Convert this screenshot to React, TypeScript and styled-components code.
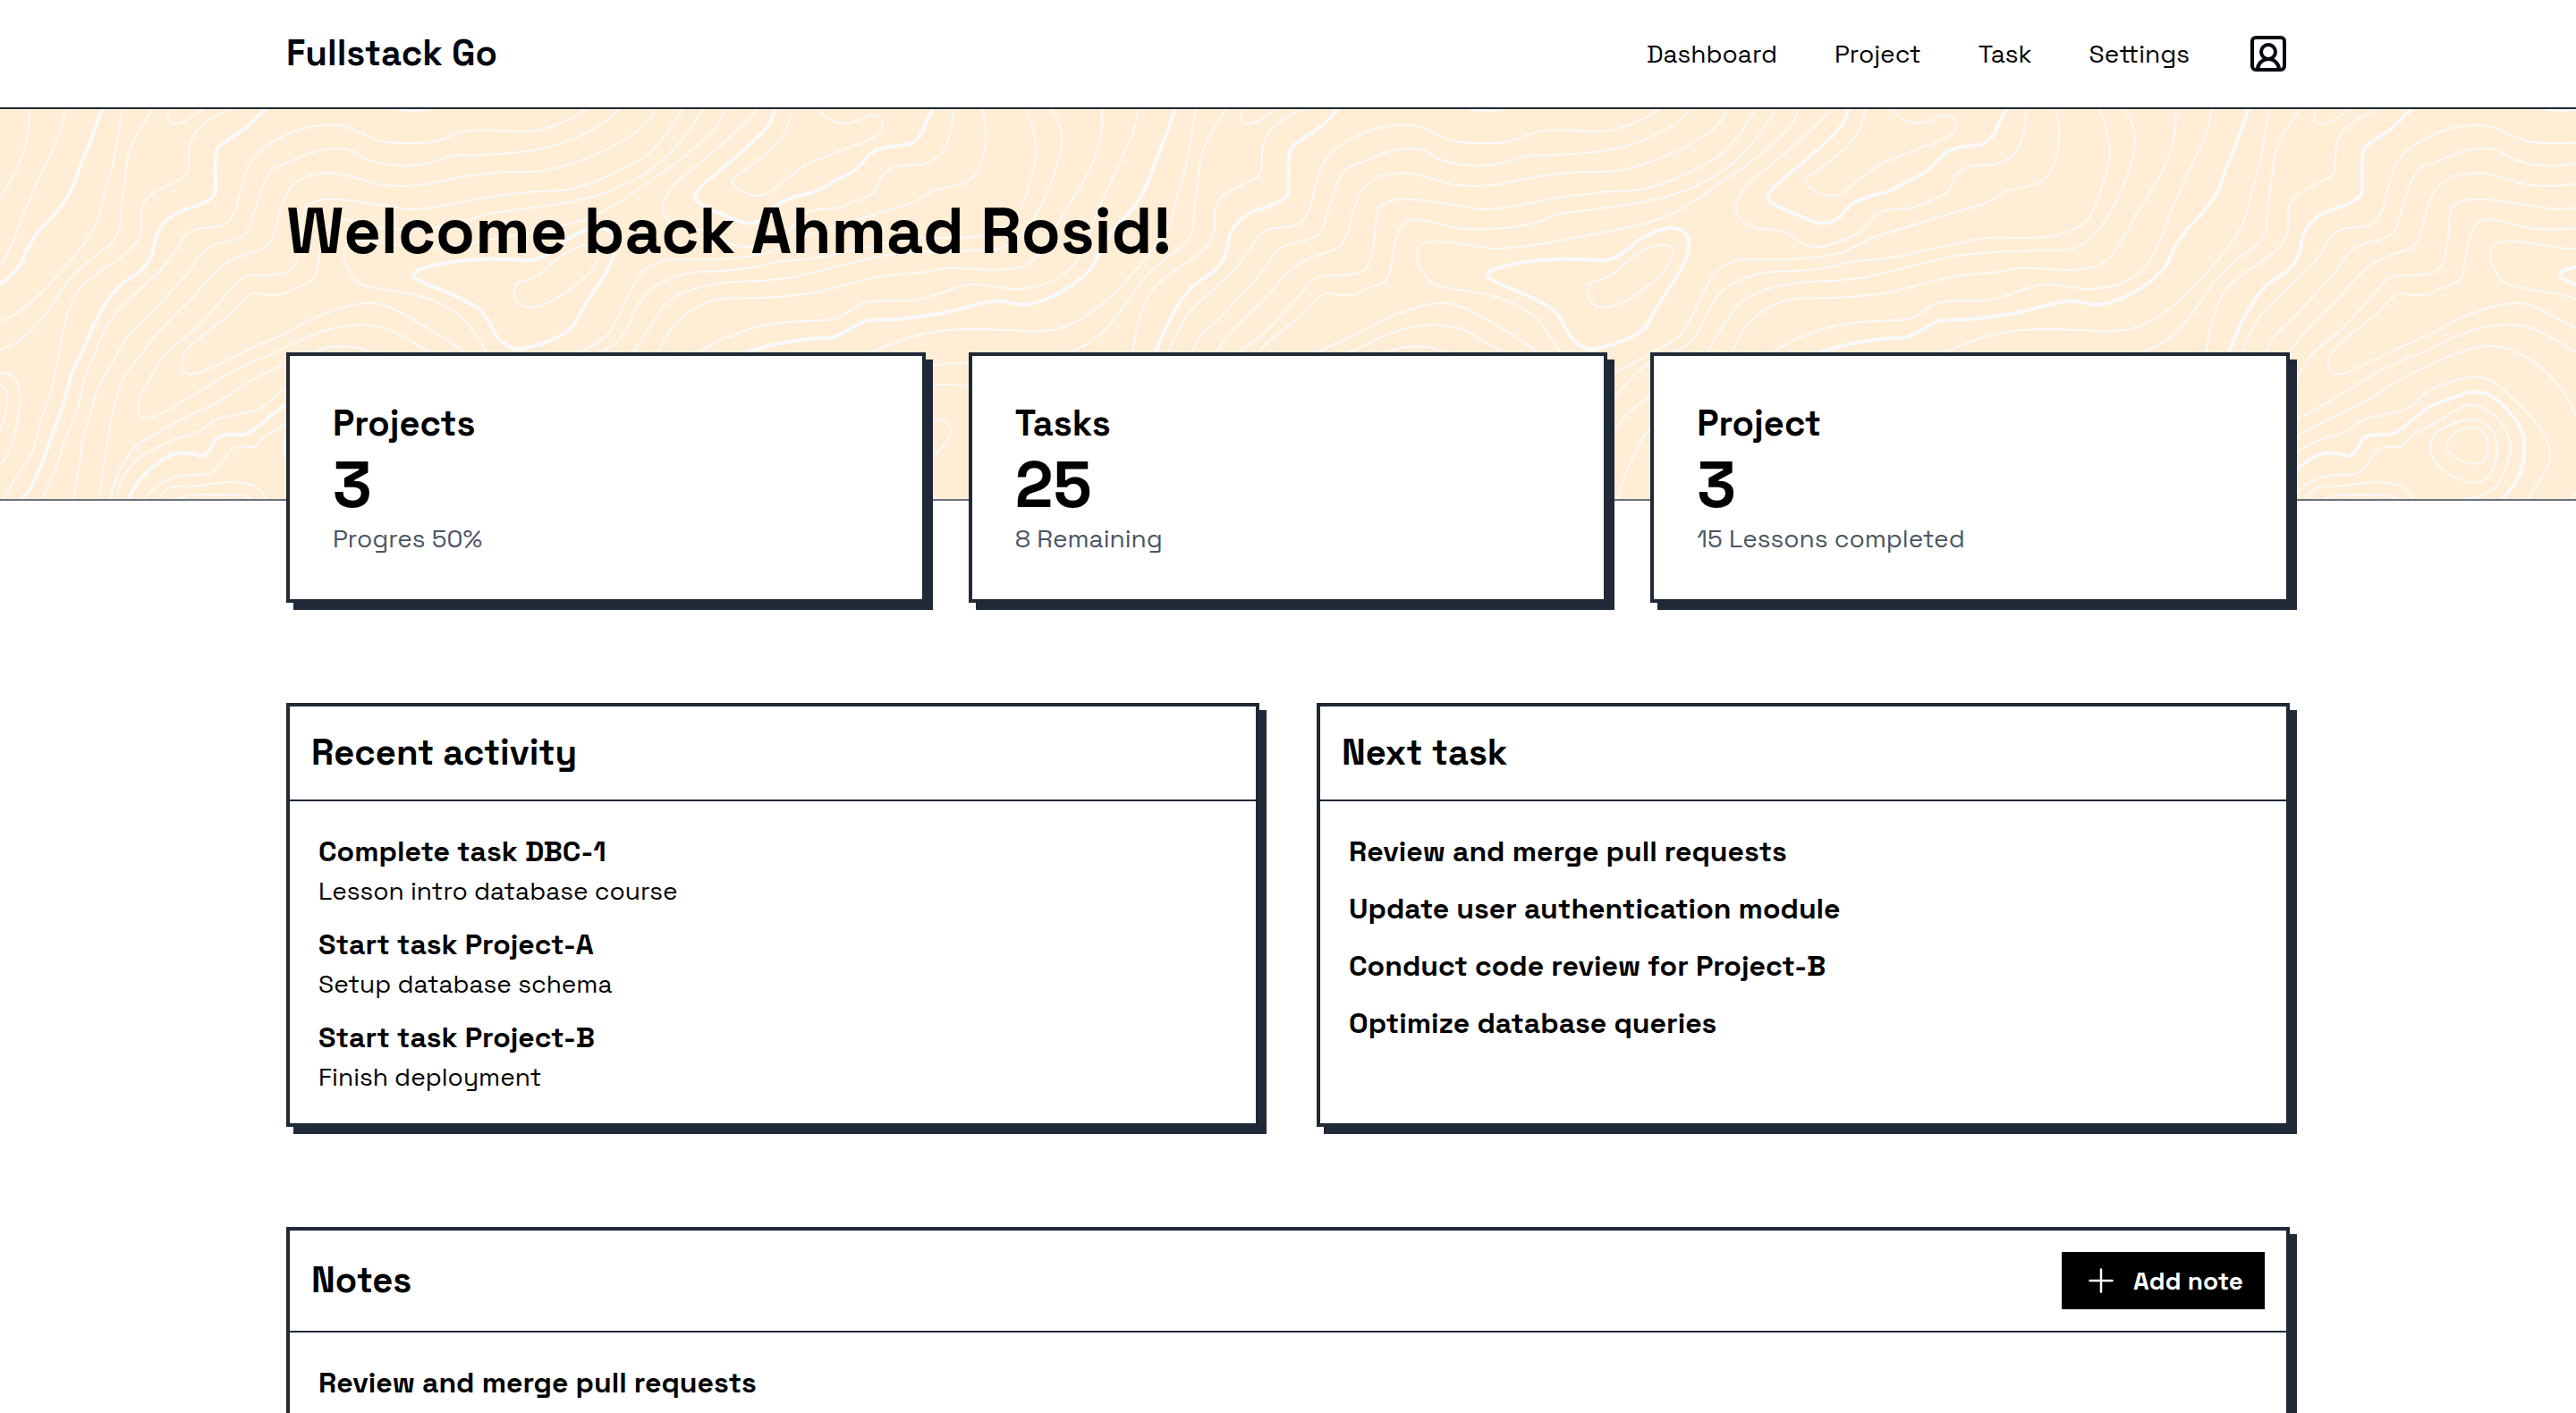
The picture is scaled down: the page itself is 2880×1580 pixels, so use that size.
import React from "react";
import styled, { createGlobalStyle } from "styled-components";
import { SquareUserRound } from "lucide-react";

const ink = "#1f2937";

const GlobalStyle = createGlobalStyle`
  *, *::before, *::after { box-sizing: border-box; }
  body {
    margin: 0;
    background: #ffffff;
    color: #000000;
    font-family: "Space Grotesk", Inter, "Liberation Sans", sans-serif;
    font-size: 28px;
    line-height: 40px;
  }
  h1, h2, h3, p, ul { margin: 0; padding: 0; }
  ul { list-style: none; }
`;

const Container = styled.div`
  width: 100%;
  max-width: 2560px;
  margin: 0 auto;
  padding: 0 160px;
`;

const Header = styled.header`
  border-bottom: 2px solid ${ink};
  background: #ffffff;
`;

const Bar = styled(Container)`
  display: flex;
  align-items: center;
  justify-content: space-between;
  height: 120px;
`;

const Brand = styled.a`
  color: #030712;
  font-size: 40px;
  line-height: 56px;
  font-weight: 600;
  text-decoration: none;
`;

const Nav = styled.nav`
  display: flex;
  align-items: center;
  gap: 64px;
`;

const NavLink = styled.a`
  color: #000000;
  text-decoration: none;
`;

const AccountButton = styled.button`
  display: flex;
  padding: 0;
  border: 0;
  background: none;
  color: #030712;
  cursor: pointer;
`;

const Hero = styled.section`
  position: relative;
  overflow: hidden;
  padding: 96px 0 260px;
  background: #ffedd5;
  border-bottom: 2px solid #6b7280;
`;

const Topography = styled.svg`
  position: absolute;
  inset: 0;
  width: 100%;
  height: 100%;
  fill: none;
  stroke: #f9fafb;
  stroke-width: 2;
`;

const HeroContent = styled(Container)`
  position: relative;
`;

const HeroTitle = styled.h1`
  font-size: 72px;
  line-height: 80px;
  font-weight: 700;
`;

const Main = styled(Container).attrs({ as: "main" })`
  position: relative;
  display: flex;
  flex-direction: column;
  gap: 112px;
  margin-top: -166px;
  padding-bottom: 112px;
`;

const Columns = styled.div<{ $count: number; $gap: number }>`
  display: grid;
  grid-template-columns: repeat(${(p) => p.$count}, minmax(0, 1fr));
  gap: ${(p) => p.$gap}px;
`;

const Box = styled.section`
  border: 4px solid ${ink};
  background: #ffffff;
  box-shadow: 8px 8px 0 ${ink};
`;

const Stat = styled(Box)`
  padding: 48px;
`;

const Heading = styled.h2`
  font-size: 40px;
  line-height: 56px;
  font-weight: 700;
`;

const StatValue = styled.p`
  font-size: 72px;
  line-height: 80px;
  font-weight: 700;
`;

const StatNote = styled.p`
  color: #4b5563;
`;

const PanelHeader = styled.header`
  display: flex;
  align-items: center;
  justify-content: space-between;
  padding: 24px;
  border-bottom: 2px solid ${ink};
`;

const List = styled.ul`
  display: flex;
  flex-direction: column;
  gap: 16px;
  padding: 32px;
`;

const ItemTitle = styled.h3`
  font-size: 32px;
  line-height: 48px;
  font-weight: 600;
`;

const AddButton = styled.button`
  display: flex;
  align-items: center;
  gap: 16px;
  height: 64px;
  padding: 0 24px;
  border: 0;
  background: #000000;
  color: #ffffff;
  font: inherit;
  font-weight: 600;
  cursor: pointer;
`;

const PlusIcon = styled.svg`
  width: 40px;
  height: 40px;
  fill: none;
  stroke: currentColor;
  stroke-width: 1.5;
  stroke-linecap: round;
`;

/* Contour map: each line is a flat x, y list on a 1960-unit-wide repeating sheet. */
type Contour = { pts: number[]; bold?: boolean; closed?: boolean };

const SHEET = 1200;
const UNIT_X = SHEET / 1960;
const UNIT_Y = 1 / 3;
const TOP = 66;

const contours: Contour[] = [
  { bold: true, pts: [972,55,970,66,950,170,930,260,915,335,890,405,855,475,835,530,820,590,800,630,770,670,735,703,705,720,685,722,660,712,640,710,610,720,550,748,500,763,455,772,415,773,395,785,370,810,345,831,320,834,280,842,235,857,185,882] },
  { bold: true, pts: [1274,55,1268,66,1235,125,1200,170,1181,200,1177,270,1176,350,1150,385,1110,412,1085,445,1070,490,1060,560,1040,610,1005,655,980,710,955,790,934,882,914,960,899,1060,879,1160,859,1260,842,1330,824,1374,818,1390] },
  { bold: true, pts: [242,55,240,66,225,125,190,190,140,270,105,325,93,360,105,388,145,420,180,446,205,446,225,425,245,385,275,360,310,343,345,310,385,270,415,215,440,195,485,182,505,150,515,110,527,66,530,55] },
  { bold: true, closed: true, pts: [1539,622,1557,600,1612,578,1672,569,1722,571,1757,572,1782,555,1822,500,1862,468,1887,468,1904,490,1907,540,1892,610,1867,680,1847,740,1827,800,1792,840,1737,870,1717,865,1692,830,1677,780,1657,735,1612,690,1557,648] },
  { bold: true, pts: [1012,1390,1018,1374,1035,1320,1058,1275,1090,1232,1110,1220,1135,1222,1155,1230,1168,1205,1180,1170,1200,1158,1230,1157,1255,1130,1300,1065,1350,1030,1380,1015,1410,1025,1445,1080,1470,1150,1473,1230,1460,1310,1435,1374,1430,1390] },
  { bold: true, pts: [1505,60,1520,67,1540,69,1558,67,1570,60] },
  { pts: [1009,55,1008,66,1000,150,990,250,975,350,962,440,940,510,910,580,860,680,815,750,770,795,740,808,710,811,660,807,600,804,540,810,480,835,415,882] },
  { pts: [1068,55,1064,66,1040,130,1020,210,1012,300,1005,400,1002,470,985,520,950,570,912,635,880,720,845,800,812,850,775,882] },
  { pts: [1215,55,1203,66,1170,98,1142,140,1130,190,1128,260,1122,290,1090,322,1058,355,1043,400,1042,470,1030,520,1000,570,960,620,925,680,903,780,892,882,879,1000,859,1110,844,1210,824,1270,789,1374,784,1390] },
  { pts: [1862,55,1854,66,1829,95,1794,122,1754,140,1690,138,1634,140,1600,163,1568,178,1510,180,1475,172,1440,145,1410,123,1370,121,1320,142,1270,190,1240,250,1225,330,1215,400,1200,445,1180,460,1140,470,1120,495,1105,540,1080,600,1040,670,1000,740,975,810,958,882,939,970,924,1080,902,1180,884,1280,861,1374,858,1390] },
  { pts: [1918,55,1914,66,1884,115,1844,155,1794,190,1734,210,1664,220,1614,223,1568,246,1540,254,1490,252,1455,235,1425,205,1395,198,1360,208,1310,245,1285,262,1270,300,1255,370,1240,460,1230,488,1210,505,1170,525,1150,555,1125,620,1090,690,1050,770,1020,820,1000,882,964,1000,949,1090,934,1180,929,1260,918,1374,917,1390] },
  { pts: [1984,55,1980,66,1970,100,1944,145,1894,200,1834,245,1774,273,1704,277,1634,292,1568,315,1530,323,1480,320,1440,300,1400,283,1365,283,1335,300,1310,340,1295,410,1283,490,1268,530,1240,550,1200,580,1165,635,1140,690,1110,745,1070,820,1044,882,1009,970,989,1090,979,1200,964,1374,963,1390] },
  { pts: [2033,55,2030,66,2000,150,1960,227,1882,300,1822,335,1762,343,1672,362,1592,390,1537,402,1480,388,1420,372,1380,369,1350,385,1338,420,1333,520,1322,590,1302,617,1262,624,1227,632,1192,700,1142,800,1089,882,1064,950,1040,1030,1036,1080,1046,1102,1065,1097,1100,1065,1160,1000,1220,935,1290,880,1350,828,1400,798,1450,790,1490,802,1530,840,1568,885,1600,960] },
  { pts: [2071,55,2068,66,2020,190,1960,285,1892,345,1832,375,1742,400,1672,418,1632,445,1572,465,1492,467,1440,445,1410,436,1385,455,1372,510,1365,580,1355,640,1320,668,1300,687,1270,689,1240,688,1200,760,1150,830,1122,882,1116,920,1122,948,1135,955,1160,942,1230,880,1300,822,1360,765,1420,727,1460,716,1500,735,1564,800,1604,845,1632,882] },
  { pts: [2111,55,2108,66,2090,130,2020,245,1960,320,1922,370,1862,430,1792,465,1692,500,1612,525,1552,534,1500,520,1447,509,1420,520,1412,550,1418,600,1440,650,1480,670,1540,688,1590,720,1630,770,1655,830,1673,882] },
  { closed: true, pts: [1747,640,1772,615,1807,560,1842,527,1867,523,1880,540,1867,600,1832,660,1792,710,1757,730,1734,722,1723,690,1727,655,1737,641] },
  { pts: [212,55,208,66,180,120,120,220,60,310,35,380,40,430,65,462,100,470,125,480,155,515,185,529,215,515,260,480,290,420,320,402,350,400,380,380,420,345,435,290,460,258,510,250,545,210,560,140,564,66,564,55] },
  { pts: [272,55,271,66,255,150,220,220,165,295,162,315,180,342,205,357,230,345,260,300,300,250,360,205,415,165,435,135,430,95,415,88,395,100,370,115,345,105,315,66,308,55] },
  { pts: [617,55,618,66,624,130,622,200,610,270,590,310,565,325,530,340,490,380,420,420,340,465,280,500,230,545,170,565,110,571,45,570,20,585,0,608,-26,680,-46,760,-71,830,-121,885,-150,915,-188,950] },
  { pts: [695,55,697,66,710,130,717,220,705,310,688,400,665,455,610,492,550,498,495,498,430,520,350,552,295,570,250,577,200,597,140,610,90,613,40,640,10,675,-16,740,-31,800,-51,850,-81,882,-123,915,-160,975,-188,1035] },
  { pts: [741,55,745,66,760,130,762,190,750,280,730,370,705,450,675,510,640,538,580,541,500,547,430,560,350,595,270,630,215,641,150,648,90,670,45,710,20,770,0,823,-19,882,-60,960,-123,1027,-165,1090,-188,1145] },
  { pts: [837,55,837,66,836,130,826,215,805,300,765,420,735,520,712,570,685,597,640,605,600,602,550,600,510,613,440,625,380,650,310,682,250,695,190,700,140,703,100,725,60,780,38,835,25,882,-40,1010,-123,1140,-158,1250,-183,1374] },
  { pts: [904,55,903,66,892,150,870,240,850,320,824,430,810,500,790,575,765,622,730,655,690,669,660,667,605,653,575,662,530,690,490,707,435,709,400,717,375,745,350,770,310,775,250,783,200,800,140,840,100,882] },
  { pts: [986,1390,987,1374,990,1340,1005,1270,1030,1200,1058,1167,1100,1120,1180,1050,1240,980,1300,925,1350,885,1390,864,1430,864,1470,890,1520,960,1550,1030,1570,1105] },
  { pts: [998,1390,999,1374,1005,1310,1035,1240,1058,1215,1100,1175,1145,1150,1180,1108,1220,1090,1260,1070,1300,1010,1350,975,1390,965,1420,985,1460,1050,1500,1130,1520,1210,1515,1270,1480,1374,1475,1390] },
  { pts: [1044,1390,1049,1374,1065,1340,1095,1305,1130,1293,1165,1290,1185,1260,1205,1210,1225,1198,1250,1197,1270,1160,1310,1120,1345,1080,1372,1058,1400,1070,1430,1115,1448,1190,1440,1270,1415,1345,1370,1374,1350,1380] },
  { pts: [1070,1390,1074,1374,1095,1335,1140,1330,1200,1318,1240,1325,1260,1345,1271,1374,1275,1390] },
  { pts: [1095,1385,1110,1374,1130,1361,1180,1360,1225,1362,1241,1374,1250,1385] },
  { closed: true, pts: [1376,1107,1400,1120,1420,1160,1422,1240,1405,1305,1375,1318,1335,1290,1308,1240,1302,1190,1315,1150,1345,1120] },
  { closed: true, pts: [1378,1135,1400,1150,1408,1200,1398,1245,1375,1255,1345,1230,1332,1205,1340,1165,1358,1140] },
  { pts: [1557,1390,1561,1374,1570,1340] },
  { pts: [770,955,784,950,804,960,817,990,820,1050,812,1150,799,1220,784,1258,760,1310] },
  { pts: [776,985,784,990,795,1010,796,1070,784,1145,770,1180] },
  { pts: [515,932,530,926,560,919,600,917] },
  { pts: [515,988,530,990,560,990,600,997] },
  { pts: [515,1104,530,1105,552,1115,560,1150,550,1190,528,1230] },
  { pts: [520,1355,528,1365,540,1380] },
  { pts: [1097,55,1095,66,1090,100,1100,115,1118,110,1135,90,1155,66,1160,55] },
];

/* Smooth curve through the points of one contour. */
function trace({ pts, closed }: Contour): string {
  const p: [number, number][] = [];
  for (let i = 0; i < pts.length; i += 2) {
    p.push([pts[i] * UNIT_X, (pts[i + 1] - TOP) * UNIT_Y]);
  }
  const n = p.length;
  const at = (i: number) =>
    closed ? p[(i + n) % n] : p[Math.max(0, Math.min(n - 1, i))];
  const f = (v: number) => v.toFixed(1);
  let d = `M${f(p[0][0])} ${f(p[0][1])}`;
  for (let i = 0; i < (closed ? n : n - 1); i++) {
    const [a, b, c, e] = [at(i - 1), at(i), at(i + 1), at(i + 2)];
    d += `C${f(b[0] + (c[0] - a[0]) / 6)} ${f(b[1] + (c[1] - a[1]) / 6)} ${f(
      c[0] - (e[0] - b[0]) / 6
    )} ${f(c[1] - (e[1] - b[1]) / 6)} ${f(c[0])} ${f(c[1])}`;
  }
  return closed ? d + "Z" : d;
}

const sheets = [-1, 0, 1, 2, 3];
const SHEET_START = 720;

function ContourMap() {
  return (
    <Topography aria-hidden="true">
      <defs>
        <g id="contour-sheet">
          {contours.map((c, i) => (
            <path key={i} d={trace(c)} strokeWidth={c.bold ? 4 : 2} />
          ))}
        </g>
      </defs>
      {sheets.map((n) => (
        <use key={n} href="#contour-sheet" x={SHEET_START + (n - 1) * SHEET} />
      ))}
    </Topography>
  );
}

const links = ["Dashboard", "Project", "Task", "Settings"];

const stats = [
  { title: "Projects", value: "3", note: "Progres 50%" },
  { title: "Tasks", value: "25", note: "8 Remaining" },
  { title: "Project", value: "3", note: "15 Lessons completed" },
];

type Item = { title: string; detail?: string };

const activity: Item[] = [
  { title: "Complete task DBC-1", detail: "Lesson intro database course" },
  { title: "Start task Project-A", detail: "Setup database schema" },
  { title: "Start task Project-B", detail: "Finish deployment" },
];

const nextTasks: Item[] = [
  { title: "Review and merge pull requests" },
  { title: "Update user authentication module" },
  { title: "Conduct code review for Project-B" },
  { title: "Optimize database queries" },
];

const notes: Item[] = [{ title: "Review and merge pull requests" }];

function Panel({
  title,
  items,
  action,
}: {
  title: string;
  items: Item[];
  action?: React.ReactNode;
}) {
  return (
    <Box>
      <PanelHeader>
        <Heading>{title}</Heading>
        {action}
      </PanelHeader>
      <List>
        {items.map((item) => (
          <li key={item.title}>
            <ItemTitle>{item.title}</ItemTitle>
            {item.detail && <p>{item.detail}</p>}
          </li>
        ))}
      </List>
    </Box>
  );
}

export default function App() {
  return (
    <>
      <GlobalStyle />
      <Header>
        <Bar>
          <Brand href="#">Fullstack Go</Brand>
          <Nav>
            {links.map((label) => (
              <NavLink key={label} href="#">
                {label}
              </NavLink>
            ))}
            <AccountButton type="button" aria-label="Account">
              <SquareUserRound size={48} strokeWidth={2} />
            </AccountButton>
          </Nav>
        </Bar>
      </Header>
      <Hero>
        <ContourMap />
        <HeroContent>
          <HeroTitle>Welcome back Ahmad Rosid!</HeroTitle>
        </HeroContent>
      </Hero>
      <Main>
        <Columns $count={3} $gap={48}>
          {stats.map((s, i) => (
            <Stat key={i}>
              <Heading>{s.title}</Heading>
              <StatValue>{s.value}</StatValue>
              <StatNote>{s.note}</StatNote>
            </Stat>
          ))}
        </Columns>
        <Columns $count={2} $gap={64}>
          <Panel title="Recent activity" items={activity} />
          <Panel title="Next task" items={nextTasks} />
        </Columns>
        <Panel
          title="Notes"
          items={notes}
          action={
            <AddButton type="button">
              <PlusIcon viewBox="0 0 24 24" aria-hidden="true">
                <path d="M12 4.5v15M4.5 12h15" />
              </PlusIcon>
              Add note
            </AddButton>
          }
        />
      </Main>
    </>
  );
}
